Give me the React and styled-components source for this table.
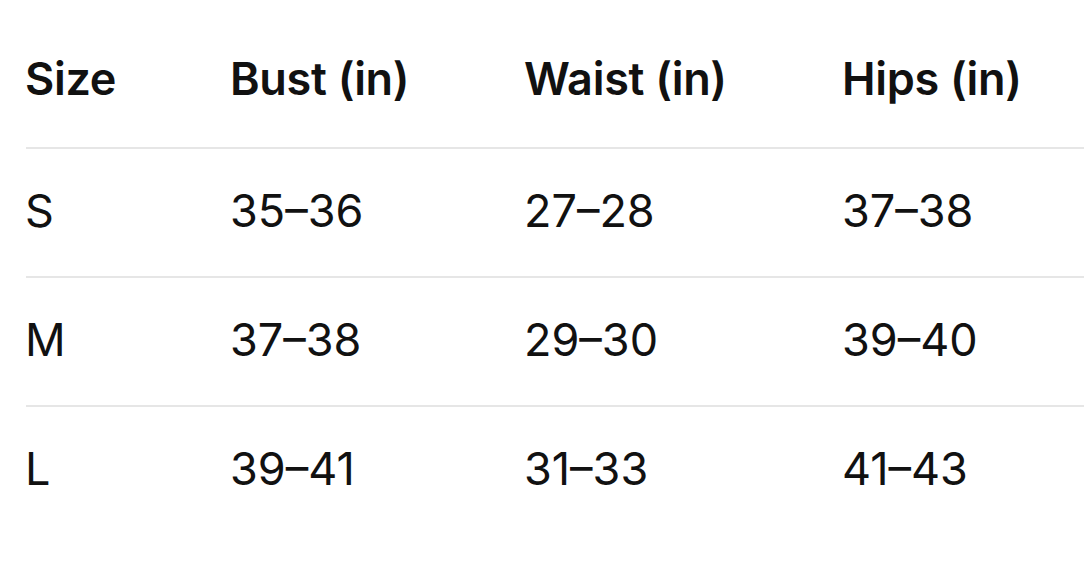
import React from "react";
import styled, { createGlobalStyle } from "styled-components";

const Global = createGlobalStyle`
  html, body { margin: 0; padding: 0; background: #fff; }
  body { font-family: Inter, "Noto Sans", sans-serif; color: #111; overflow: hidden; }
`;

const Table = styled.div`
  padding-left: 25px;
  width: 1084px;
  box-sizing: border-box;
`;

const Row = styled.div`
  display: grid;
  grid-template-columns: 205px 294px 318px 1fr;
  margin-left: 1px;
  padding: ${(p) => (p.$head ? "52px 0 41px" : "35px 0 38px")};
  border-bottom: ${(p) => (p.$last ? "none" : "2px solid #e6e6e6")};
`;

const Cell = styled.div`
  font-size: 45px;
  line-height: 54px;
  margin-left: -1px;
  font-weight: ${(p) => (p.$head ? 600 : 400)};
  letter-spacing: ${(p) => (p.$head ? "-0.3px" : "0")};
  white-space: nowrap;
`;

const headers = ["Size", "Bust (in)", "Waist (in)", "Hips (in)"];
const rows = [
  ["S", "35–36", "27–28", "37–38"],
  ["M", "37–38", "29–30", "39–40"],
  ["L", "39–41", "31–33", "41–43"],
];

export default function App() {
  return (
    <>
      <Global />
      <Table>
        <Row $head>
          {headers.map((h) => (
            <Cell $head key={h}>{h}</Cell>
          ))}
        </Row>
        {rows.map((r, i) => (
          <Row key={r[0]} $last={i === rows.length - 1}>
            {r.map((c, j) => (
              <Cell key={j}>{c}</Cell>
            ))}
          </Row>
        ))}
      </Table>
    </>
  );
}
